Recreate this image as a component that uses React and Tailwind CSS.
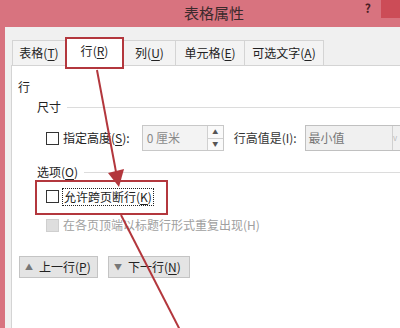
import React from "react";

const font = { fontFamily: '"Noto Sans CJK SC", "Noto Sans", sans-serif' };

// underlined mnemonic letter, e.g. (T)
function Key({ k }) {
  return (
    <span>
      (<span className="underline underline-offset-2">{k}</span>)
    </span>
  );
}

function Tab({ label, k, active, width }) {
  if (active) {
    return (
      <div className="relative z-10 -mb-[4px] -ml-px flex h-[32px] w-[59px] items-center justify-center border-2 border-[#b3373d] bg-white pb-[4px] text-[12px] text-[#222]">
        {label}
        <Key k={k} />
      </div>
    );
  }
  return (
    <div
      className={`-ml-px flex h-[25px] items-center justify-center border border-b-0 border-[#d4d4d4] bg-[#f3f3f3] text-[12px] text-[#222] first:ml-0 ${width}`}
    >
      {label}
      <Key k={k} />
    </div>
  );
}

function Checkbox({ disabled }) {
  return (
    <div
      className={`h-[13px] w-[13px] shrink-0 border ${
        disabled ? "border-[#cfcfcf] bg-[#dedede]" : "border-[#333] bg-white"
      }`}
    ></div>
  );
}

function SectionTitle({ children }) {
  return (
    <div className="ml-[25px] flex h-[16px] items-center text-[12px] leading-[16px] text-[#222]">
      <span>{children}</span>
      <div className="ml-[6px] h-px flex-1 bg-[#dcdcdc]"></div>
    </div>
  );
}

export default function App() {
  return (
    <div
      className="relative flex h-[328px] w-[400px] flex-col overflow-hidden bg-[#d8737f]"
      style={font}
    >
      {/* Title bar */}
      <div className="flex h-[27px] shrink-0 items-start">
        <div className="ml-[184px] mt-[3px] text-[15px] leading-[20px] text-[#3a2a2c]">表格属性</div>
        <div className="ml-auto mt-[1px] text-[12px] font-bold leading-[14px] text-[#4a1c22]">?</div>
        <div className="ml-[10px] h-[18px] w-[19px] bg-[#cc4c57]"></div>
      </div>

      {/* Dialog body */}
      <div className="ml-[5px] flex flex-1 flex-col bg-[#f0f0f0] pl-[6px] pt-[10px]">
        {/* Tabs */}
        <div className="flex items-end pl-[1px]">
          <Tab label="表格" k="T" width="w-[54px]" />
          <Tab label="行" k="R" active />
          <Tab label="列" k="U" width="w-[53px]" />
          <Tab label="单元格" k="E" width="w-[70px]" />
          <Tab label="可选文字" k="A" width="w-[80px]" />
        </div>

        {/* Tab panel */}
        <div className="flex flex-1 flex-col border-l border-t border-[#d4d4d4] bg-white">
          <div className="ml-[6px] mt-[13px] h-[16px] text-[12px] leading-[16px] text-[#222]">行</div>

          <div className="mt-[4px]">
            <SectionTitle>尺寸</SectionTitle>
          </div>

          {/* Height row */}
          <div className="mt-[10px] flex h-[26px] items-center text-[12px] text-[#222]">
            <div className="ml-[34px]">
              <Checkbox />
            </div>
            <span className="ml-[4px]">
              指定高度<Key k="S" />:
            </span>
            <div className="ml-[12px] flex h-[26px] w-[82px] border border-[#c8c8c8] bg-[#f3f3f3]">
              <div className="flex flex-1 items-center pl-[4px] text-[#8a8a8a]">0 厘米</div>
              <div className="flex w-[16px] flex-col border-l border-[#d0d0d0] bg-[#fafafa]">
                <div className="flex flex-1 items-center justify-center border-b border-[#d0d0d0] text-[6px] leading-none text-[#555]">▲</div>
                <div className="flex flex-1 items-center justify-center text-[6px] leading-none text-[#555]">▼</div>
              </div>
            </div>
            <span className="ml-[10px] text-[#333]">行高值是(I):</span>
            <div className="ml-[8px] flex h-[26px] flex-1 border border-r-0 border-[#c0c0c0] bg-[#f0f0f0]">
              <div className="flex flex-1 items-center pl-[3px] text-[#777]">最小值</div>
              <div className="flex w-[8px] items-center border-l border-[#d0d0d0] text-[8px] text-[#bbb]">v</div>
            </div>
          </div>

          <div className="mt-[13px]">
            <SectionTitle>
              选项<Key k="O" />
            </SectionTitle>
          </div>

          {/* Highlighted option */}
          <div className="ml-[23px] flex h-[35px] w-[133px] items-center border-2 border-[#b3373d] pb-[2px] pl-[9px] text-[12px] text-[#222]">
            <Checkbox />
            <span className="ml-[3px] border border-dotted border-[#222] px-px leading-[16px]">
              允许跨页断行<Key k="K" />
            </span>
          </div>

          <div className="ml-[34px] mt-[2px] flex h-[16px] items-center text-[12px] text-[#a0a0a0]">
            <Checkbox disabled />
            <span className="ml-[4px]">在各页顶端以标题行形式重复出现(H)</span>
          </div>

          {/* Prev / next buttons */}
          <div className="ml-[7px] mt-[23px] flex gap-[10px]">
            <button className="flex h-[22px] w-[79px] items-center border border-[#c4c4c4] bg-[#e4e4e4] pl-[5px] text-[12px] text-[#222]">
              <span className="text-[8px] text-[#777]">▲</span>
              <span className="ml-[6px]">
                上一行<Key k="P" />
              </span>
            </button>
            <button className="flex h-[22px] w-[82px] items-center border border-[#c4c4c4] bg-[#e4e4e4] pl-[5px] text-[12px] text-[#222]">
              <span className="text-[8px] text-[#777]">▼</span>
              <span className="ml-[6px]">
                下一行<Key k="N" />
              </span>
            </button>
          </div>
        </div>
      </div>

      {/* Annotation arrows drawn over the dialog */}
      <svg className="pointer-events-none absolute inset-0" width="400" height="328" viewBox="0 0 400 328">
        <line x1="97" y1="70" x2="116" y2="172" stroke="#b3373d" strokeWidth="2" />
        <polygon points="108,173 124,169 119,187" fill="#b3373d" />
        <line x1="121" y1="215" x2="180" y2="330" stroke="#b3373d" strokeWidth="2" />
      </svg>
    </div>
  );
}
